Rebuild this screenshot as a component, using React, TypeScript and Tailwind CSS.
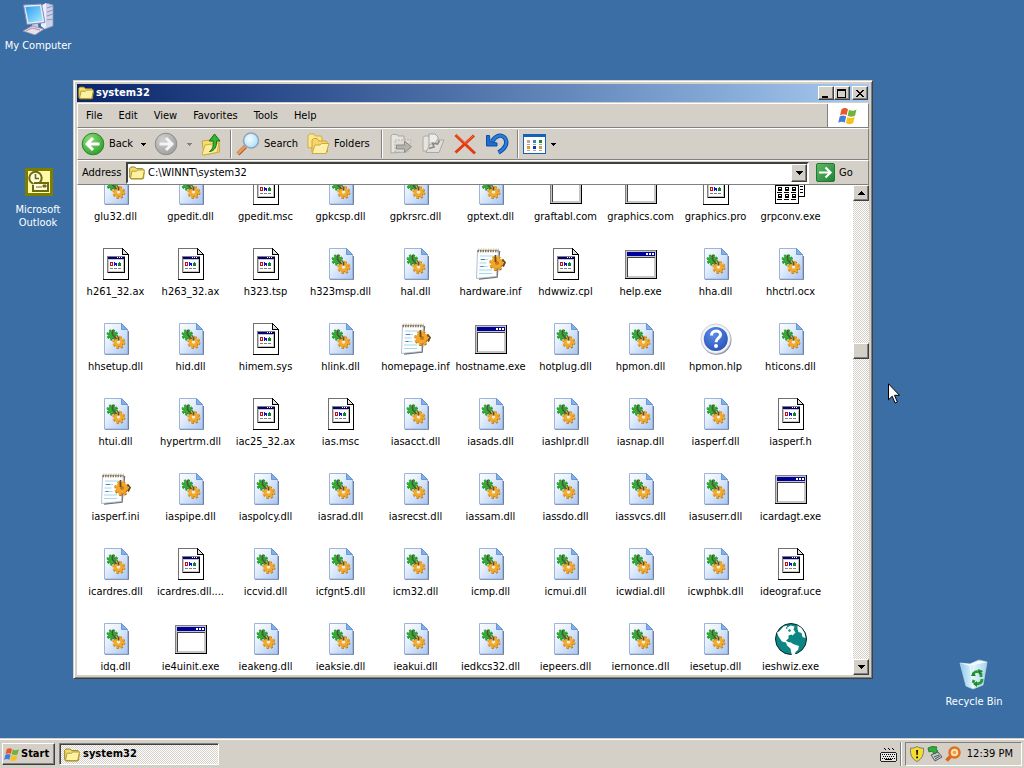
import type { ReactNode } from "react";

type Kind = "dll" | "page" | "inf" | "exe" | "hlp" | "grp" | "globe";

/* One string per row: name or name|kind (dll by default) */
const ROWS = [
  "glu32.dll gpedit.dll gpedit.msc|page gpkcsp.dll gpkrsrc.dll gptext.dll graftabl.com|exe graphics.com|exe graphics.pro|page grpconv.exe|grp",
  "h261_32.ax|page h263_32.ax|page h323.tsp|page h323msp.dll hal.dll hardware.inf|inf hdwwiz.cpl|page help.exe|exe hha.dll hhctrl.ocx",
  "hhsetup.dll hid.dll himem.sys|page hlink.dll homepage.inf|inf hostname.exe|exe hotplug.dll hpmon.dll hpmon.hlp|hlp hticons.dll",
  "htui.dll hypertrm.dll iac25_32.ax|page ias.msc|page iasacct.dll iasads.dll iashlpr.dll iasnap.dll iasperf.dll iasperf.h|page",
  "iasperf.ini|inf iaspipe.dll iaspolcy.dll iasrad.dll iasrecst.dll iassam.dll iassdo.dll iassvcs.dll iasuserr.dll icardagt.exe|exe",
  "icardres.dll icardres.dll....|page iccvid.dll icfgnt5.dll icm32.dll icmp.dll icmui.dll icwdial.dll icwphbk.dll ideograf.uce|page",
  "idq.dll ie4uinit.exe|exe ieakeng.dll ieaksie.dll ieakui.dll iedkcs32.dll iepeers.dll iernonce.dll iesetup.dll ieshwiz.exe|globe",
];

const FILES = ROWS.flatMap((row) => row.split(" ")).map((f) => {
  const [name, kind] = f.split("|");
  return { name, kind: (kind ?? "dll") as Kind };
});

const MENUS = ["File", "Edit", "View", "Favorites", "Tools", "Help"];

const SCROLL_POS = 142 / 442;

const RAISED =
  "border border-white border-r-[#404040] border-b-[#404040] bg-[#d4d0c8] shadow-[inset_-1px_-1px_0_#808080]";

const DITHER =
  "bg-[repeating-conic-gradient(#ffffff_0_25%,#d4d0c8_0_50%)] bg-[length:2px_2px]";

/* ---------- icons ---------- */

function Gear({ x, y, r, fill, edge }: { x: number; y: number; r: number; fill: string; edge: string }) {
  const step = (2 * Math.PI * r) / 16;
  return (
    <g>
      <circle cx={x + 0.5} cy={y + 0.7} r={r} fill="none" stroke={edge} strokeWidth="2" strokeDasharray={`${step} ${step}`} />
      <circle cx={x + 0.5} cy={y + 0.7} r={r - 0.8} fill={edge} />
      <circle cx={x} cy={y} r={r} fill="none" stroke={fill} strokeWidth="1.800" strokeDasharray={`${step} ${step}`} />
      <circle cx={x} cy={y} r={r - 0.8} fill={fill} />
    </g>
  );
}

function DllIcon() {
  return (
    <svg className="size-8" viewBox="0 0 32 32" aria-hidden="true">
      <path d="M5 31.5h23.500V8" fill="none" stroke="#6f7f9f" />
      <path d="M4.500 .500h17l6 6v24.500h-23z" fill="url(#dllPage)" stroke="#9db4dc" />
      <path d="M21.500 .500v6h6z" fill="#7fb0ea" stroke="#5a8ccb" strokeWidth=".8" />
      <Gear x={12} y={11.500} r={4.600} fill="#35ac35" edge="#1b7a22" />
      <Gear x={18.500} y={19} r={5.400} fill="#f2aa2c" edge="#b87414" />
      <circle cx="18.500" cy="19" r="1.800" fill="#f4ead0" />
      <path d="M12.500 7v4.500l4 4.500M18.500 13.500v4" fill="none" stroke="#4f5340" strokeWidth="1.600" />
    </svg>
  );
}

function PageIcon() {
  return (
    <svg className="size-8" viewBox="0 0 32 32" shapeRendering="crispEdges" aria-hidden="true">
      <path d="M3 0h20v1h1v1h1v1h1v1h1v1h1v1h1v26H3z" fill="#000" />
      <path d="M3 0h19v1H4v30H3z" fill="#707070" />
      <path d="M4 1h18v6h6v24H4z" fill="#fff" />
      <path d="M23 2h1v1h1v1h1v1h1v1h-4z" fill="#e0e0e0" />
      <path d="M7 8h18v17H7z" fill="#808080" />
      <path d="M8 9h17v16H8z" fill="#000" />
      <path d="M8 9h16v15H8z" fill="#c8c4bc" />
      <path d="M9 12h14v11H9z" fill="#fff" />
      <path d="M8 9h16v2H8z" fill="#00007f" />
      <path d="M17 9h1v1h-1zM19 9h1v1h-1zM21 9h1v1h-1z" fill="#fff" />
      <path d="M10 14h3v1h-3zM10 15h1v3h-1zM12 15h1v3h-1zM11 17h1v1h-1z" fill="#c01020" />
      <path d="M14 14h1v4h-1zM15 15h2v2h-2zM16 17h1v1h-1z" fill="#1010d0" />
      <path d="M19 14h1v1h-1zM18 15h3v3h-3z" fill="#108030" />
      <path d="M10 20h3v1h-3zM14 20h3v1h-3zM18 20h3v1h-3z" fill="#808080" />
    </svg>
  );
}

function InfIcon() {
  return (
    <svg className="size-8" viewBox="0 0 32 32" aria-hidden="true">
      <path d="M4 31l18-2 2.500-26" fill="none" stroke="#6d6f72" strokeWidth="1.500" />
      <path d="M2.500 2.500h21l-2 26L1.500 30.500z" fill="#fbfdff" stroke="#a4b0c0" strokeWidth=".8" />
      <path d="M2.500 3h21" stroke="#8b7654" strokeWidth="2.500" strokeDasharray="1.500 1" />
      <path d="M3 1.200h21" stroke="#c9bd9f" strokeWidth="1" strokeDasharray="1.500 1" />
      <path d="M5 8h13M5 11.500h8M4.500 15h7M4.500 18.500h8M4 22h13M4 25.500h13" stroke="#a5dbe6" strokeWidth="1.200" />
      <path d="M6 11.500h4M5.500 18.500h3" stroke="#5a7fc0" strokeWidth="1.200" />
      <Gear x={21.500} y={15} r={6.500} fill="#f3a62a" edge="#a9650c" />
      <circle cx="22" cy="15" r="2" fill="#c07c1c" />
      <path d="M20.500 7v7M27.500 11.500l2.500 3-2 4" fill="none" stroke="#6a4a18" strokeWidth="1.800" />
    </svg>
  );
}

function ExeIcon() {
  return (
    <svg className="size-8" viewBox="0 0 32 32" shapeRendering="crispEdges" aria-hidden="true">
      <path d="M0 2h32v29H0z" fill="#000" />
      <path d="M0 2h31v28H0z" fill="#808080" />
      <path d="M1 3h30v27H1z" fill="#c6c6c6" />
      <path d="M3 9h26v19H3z" fill="#fff" />
      <path d="M2 9h1v20H2zM2 9h28v1H2z" fill="#404040" />
      <path d="M2 4h28v4H2z" fill="#00009c" />
      <path d="M21 5h2v2h-2zM24 5h2v2h-2zM27 5h2v2h-2z" fill="#fff" />
    </svg>
  );
}

function HelpIcon() {
  return (
    <svg className="size-8" viewBox="0 0 32 32" aria-hidden="true">
      <circle cx="16.500" cy="16.800" r="15" fill="#8b8f99" />
      <circle cx="15.800" cy="15.800" r="14.800" fill="#f3f4f8" stroke="#c3c7d2" strokeWidth=".8" />
      <circle cx="15.800" cy="16" r="12" fill="url(#helpBlue)" />
      <path d="M11.500 12.500c0-5.800 9-5.800 9-.8 0 3.600-4.500 3.400-4.500 7.500" fill="none" stroke="#fff" strokeWidth="3" />
      <circle cx="16" cy="23" r="2" fill="#fff" />
    </svg>
  );
}

function GroupIcon() {
  const cells = [14, 21];
  return (
    <svg className="size-8" viewBox="0 0 32 32" shapeRendering="crispEdges" aria-hidden="true">
      <path d="M18 6h12v18H18z" fill="#000" />
      <path d="M19 7h10v16H19z" fill="#fff" />
      <path d="M25 10h3v1h-3zM25 13h3v1h-3zM25 16h3v1h-3zM25 19h3v1h-3z" />
      <path d="M0 9h24v22H0z" fill="#000" />
      <path d="M1 10h21v1H1z" fill="#1f9a8c" />
      <path d="M1 13h22v17H1z" fill="#fff" />
      {cells.map((y) =>
        [3, 10, 17].map((x) => (
          <g key={`${x}-${y}`}>
            <rect x={x} y={y} width="4" height="4" fill="#000" />
            <rect x={x + 1} y={y + 1} width="2" height="1" fill="#fff" />
            <rect x={x - 1} y={y + 5} width="5" height="1" fill="#000" />
          </g>
        ))
      )}
    </svg>
  );
}

function GlobeIcon() {
  return (
    <svg className="size-8" viewBox="0 0 32 32" aria-hidden="true">
      <circle cx="16" cy="16" r="15.500" fill="#0b8682" stroke="#0a2a2a" strokeWidth="1" />
      <path
        d="M4.500 8l4-4.500 3-1 1 2 3-2 4 1-1 3 2 3-3 3-1-1-3 1v3l-2.500 2 2 1.500 3 .500 2 1.500 6 2-1 4-2.500 2-.5 3-3 .5-1-4-.5-3-3.500-3-1-3-4-1-3.500-5-1.500-4z"
        fill="#fff"
      />
      <path d="M22.500 2.500l4 2.500 3 5 1 5-3-1-1-4-3-1-1-3z" fill="#fff" />
      <path d="M13 7l2-1 1 2-2 1zM11 4l2 1-2 1z" fill="#0b8682" />
    </svg>
  );
}

const FILE_ICONS: Record<Kind, () => ReactNode> = {
  dll: DllIcon,
  page: PageIcon,
  inf: InfIcon,
  exe: ExeIcon,
  hlp: HelpIcon,
  grp: GroupIcon,
  globe: GlobeIcon,
};

function FolderIcon({ className = "size-4" }: { className?: string }) {
  return (
    <svg className={className} viewBox="0 0 16 16" aria-hidden="true">
      <path d="M.7 12.500V3.200L1.900 2h4l1.400 1.600h6.500l.9 1v8.400l-1 1H2z" fill="#f3dc6c" stroke="#8c7a22" strokeWidth=".9" />
      <path d="M1.500 13.500L3 6.200h4.500L8.800 5h6.500v1.500l-1.500 7z" fill="#fdf2a2" stroke="#a08a28" strokeWidth=".8" />
      <path d="M3 13.500h11l1.300-6.500" fill="none" stroke="#b89a25" strokeWidth="1" />
    </svg>
  );
}

function WindowsFlag({ className }: { className: string }) {
  return (
    <svg className={className} viewBox="0 0 20 18" aria-hidden="true">
      <path d="M3.500 2.200C6 .6 8 .8 10 2.200L8.500 8.300C6.500 7 4.500 7 2 8.400z" fill="#e8562a" />
      <path d="M11 2.700c2.300 1.300 4.500 1.400 7.500-.2L17 8.700c-3 1.500-5 1.300-7.400.1z" fill="#6fb43a" />
      <path d="M1.700 9.500c2.500-1.400 4.500-1.300 6.500 0l-1.500 6.200c-2-1.400-4-1.400-6.500.1z" fill="#3f7fd8" />
      <path d="M9.300 10c2.400 1.300 4.500 1.300 7.400-.1l-1.500 6c-3 1.600-5 1.600-7.400.2z" fill="#f7c11f" />
    </svg>
  );
}

function Caret({ muted = false }: { muted?: boolean }) {
  return (
    <svg className="h-[3px] w-[5px]" viewBox="0 0 5 3" shapeRendering="crispEdges" aria-hidden="true">
      <path d="M0 0h5v1H0zM1 1h3v1H1zM2 2h1v1H2z" fill={muted ? "#808080" : "#000"} />
    </svg>
  );
}

function Arrow({ up = false }: { up?: boolean }) {
  return (
    <svg className="h-1 w-[7px]" viewBox="0 0 7 4" shapeRendering="crispEdges" aria-hidden="true">
      {up ? <path d="M3 0h1v1H3zM2 1h3v1H2zM1 2h5v1H1zM0 3h7v1H0z" /> : <path d="M0 0h7v1H0zM1 1h5v1H1zM2 2h3v1H2zM3 3h1v1H3z" />}
    </svg>
  );
}

function RoundArrow({ back = false }: { back?: boolean }) {
  return (
    <svg className="size-6" viewBox="0 0 24 24" aria-hidden="true">
      <circle cx="12" cy="12" r="10.800" fill={back ? "url(#backGreen)" : "url(#fwdGray)"} stroke={back ? "#258a24" : "#8d8d8d"} />
      {back ? (
        <path d="M18.500 12H7M12 6l-6 6 6 6" fill="none" stroke="#fff" strokeWidth="3" />
      ) : (
        <path d="M5.500 12H17M12 6l6 6-6 6" fill="none" stroke="#f4f4f4" strokeWidth="3" />
      )}
    </svg>
  );
}

function UpIcon() {
  return (
    <svg className="size-6" viewBox="0 0 24 24" aria-hidden="true">
      <path d="M3 9l8-1 1 1 8-1 .500 12L5 23z" fill="#f5dc74" stroke="#c8a63a" />
      <path d="M3 22.500L6 13l14-2-2 9.500L4 23z" fill="#fbeb9a" stroke="#d0ae40" />
      <path d="M10.500 19.500c3-2 4-5 3.700-10.500h-4L15.500 2l5.500 7h-3.500c.3 6-2 10-7 10.500z" fill="#35b335" stroke="#167018" />
    </svg>
  );
}

function SearchIcon() {
  return (
    <svg className="size-6" viewBox="0 0 24 24" aria-hidden="true">
      <path d="M9.500 14.500L2 22" stroke="#a85c34" strokeWidth="4" />
      <path d="M9.500 14L2 21.500" stroke="#ee9a5c" strokeWidth="2.500" />
      <circle cx="15" cy="8.500" r="7.500" fill="url(#lens)" stroke="#8fa5bd" strokeWidth="1.600" />
    </svg>
  );
}

function FoldersIcon() {
  return (
    <svg className="size-6" viewBox="0 0 24 24" aria-hidden="true">
      <path d="M2 16V4l1.500-2H8l1.500 2H15l1 2v9z" fill="#fbe692" stroke="#d1ac3e" />
      <path d="M6 20V8l1.500-1.500H11L13 9h7l1.500 1.500V20z" fill="#f5d66b" stroke="#cda334" />
      <path d="M6 21.500L9 13h5l1.500-1.500H23L20 21.500z" fill="#fdf0a8" stroke="#d0a93c" />
    </svg>
  );
}

function MoveIcon({ copy = false }: { copy?: boolean }) {
  return (
    <svg className="size-6" viewBox="0 0 24 24" aria-hidden="true">
      {copy ? (
        <>
          <path d="M2 19V6l1.500-2H8l1 2h2v13z" fill="#e6e4df" stroke="#aaa8a2" />
          <path d="M8 2h6l3 3v12H8z" fill="#eeece8" stroke="#a5a39d" />
          <path d="M5 20.500L9 12h5l2-4h7l-5 12.500z" fill="#e0deda" stroke="#aaa8a2" />
          <path d="M8 16.500l5-1.500-1.500-4 5 1 2-3.500" fill="none" stroke="#8c8a85" strokeWidth="1.600" />
        </>
      ) : (
        <>
          <path d="M2 21V4l1.500-1.500H8L9 4h6v16z" fill="#e6e4df" stroke="#aaa8a2" />
          <path d="M6 20V8h16l-3 12z" fill="#dedcd7" stroke="#b4b2ac" strokeDasharray="2 1" />
          <path d="M7.500 13h8V9l7 5.800-7 5.700V17h-8z" fill="#b4b2ad" stroke="#8c8a85" />
        </>
      )}
    </svg>
  );
}

function DeleteIcon() {
  return (
    <svg className="size-6" viewBox="0 0 24 24" aria-hidden="true">
      <path d="M2.500 3L22 21.500M21 3.500L2.500 20.500" fill="none" stroke="#e23a13" strokeWidth="3" />
      <path d="M3 2.500L12 11M20 4l-8 7.500" fill="none" stroke="#ff6a3c" strokeWidth="1" />
    </svg>
  );
}

function UndoIcon() {
  return (
    <svg className="size-6" viewBox="0 0 24 24" aria-hidden="true">
      <path d="M7 9.500C11 3.500 16 2 19.500 5.500c4 5 1 11-6 15" fill="none" stroke="#0c4fa8" strokeWidth="4.400" />
      <path d="M7 9.500C11 3.500 16 2 19.500 5.500c4 5 1 11-6 15" fill="none" stroke="#2b7ddb" strokeWidth="2.400" />
      <path d="M1.500 3.500v10.500h10.500v-3L5 9.500l-.5-6z" fill="#1f6dcc" stroke="#0c4fa8" strokeLinejoin="round" />
    </svg>
  );
}

function ViewsIcon() {
  const dots = [
    [5, 9, "#d0a0a0"], [11, 9, "#3a84c8"], [17, 9, "#1b8a2c"],
    [5, 15, "#e09a3c"], [11, 15, "#1038b0"], [17, 15, "#c8a03c"],
  ] as const;
  return (
    <svg className="size-6" viewBox="0 0 24 24" shapeRendering="crispEdges" aria-hidden="true">
      <rect x="0" y="2" width="23" height="20" rx="1" fill="#1560bd" />
      <rect x="1" y="5" width="21" height="16" fill="#fdfdfb" />
      {dots.map(([x, y, fill]) => (
        <g key={`${x}-${y}`}>
          <rect x={x - 1} y={y - 1} width="3" height="3" fill={fill} />
          <rect x={x - 1} y={y + 3} width="3" height="1" fill="#a8a8a8" />
        </g>
      ))}
    </svg>
  );
}

function GoIcon() {
  return (
    <svg className="size-[19px]" viewBox="0 0 19 19" aria-hidden="true">
      <rect x=".5" y=".5" width="18" height="18" rx="1.500" fill="url(#goGreen)" stroke="#1f7a35" />
      <path d="M3 9.500h11M9.500 4.500l5 5-5 5" fill="none" stroke="#fff" strokeWidth="2.200" />
    </svg>
  );
}

function ComputerIcon() {
  return (
    <svg className="size-8" viewBox="0 0 32 32" aria-hidden="true">
      <path d="M19 3l5-3 7 2v21l-8 3-4-3z" fill="#cdd2ea" stroke="#8d96bd" strokeWidth=".8" />
      <path d="M19 3l5-3v24l-1 2-4-3z" fill="#eceffa" />
      <path d="M25 5l6-2M25 9l6-2M25 13l6-2M25 17l6-1" stroke="#8f98bd" strokeWidth="1.200" />
      <path d="M1.500 2l18-1 3.500 18.500L5 21.500z" fill="#e8ebf5" stroke="#7d8db8" />
      <path d="M3.500 4L18 3l2.700 14.800L6.500 19.500z" fill="url(#screen)" />
      <path d="M10 21.500l6-.7.500 4-6 1z" fill="#c6cce2" />
      <path d="M1 28l9-5 12 3-9 6z" fill="#e4e2ec" stroke="#8d90ac" strokeWidth=".8" />
      <path d="M4 28l6-3 8 2" fill="none" stroke="#c06a8a" strokeWidth=".8" />
    </svg>
  );
}

function OutlookIcon() {
  return (
    <svg className="size-8" viewBox="0 0 32 32" aria-hidden="true">
      <path d="M3 1h28v28H3z" fill="#7d7d00" />
      <path d="M6 4h22v22H6z" fill="#fff9a8" />
      <circle cx="13.500" cy="11" r="6.200" fill="#fffde0" stroke="#6d6a10" strokeWidth="2" />
      <path d="M13.500 7v4.500H17" fill="none" stroke="#6d6a10" strokeWidth="1.600" />
      <path d="M12 16h14v8H11v-6" fill="#fffde0" stroke="#6d6a10" strokeWidth="2" />
      <path d="M21 18h3v2h-3zM14 20h6" fill="#6d6a10" stroke="#6d6a10" />
    </svg>
  );
}

function RecycleIcon() {
  return (
    <svg className="size-8" viewBox="0 0 32 32" aria-hidden="true">
      <path d="M2 4l10 1 9-4 8 2-4 23-10 4-7-3z" fill="url(#bin)" stroke="#b7d4e6" strokeWidth=".8" />
      <path d="M2 4l10 3 17-4-9-1-8 3z" fill="#f4fbff" />
      <path d="M12 7l3 22" stroke="#fff" strokeOpacity=".7" />
      <path d="M15 17c0-4 3-5 6-4M23 14v4M24 20c0 4-3 5-6 5M15 24l1-3" fill="none" stroke="#259c35" strokeWidth="2.800" />
      <path d="M20 10l5 2-4 4zM19 22v6l-4-3zM13 17h5l-3-4z" fill="#1b8a2c" />
    </svg>
  );
}

function KeyboardIcon() {
  return (
    <svg className="h-4 w-[17px]" viewBox="0 0 17 16" shapeRendering="crispEdges" aria-hidden="true">
      <path d="M4 2h1v1h1v1H5V3H4zM8 2h1v1h1v1H9V3H8zM12 2h1v1h1v1h-1V3h-1z" />
      <path d="M1 6h15v1h1v8h-1v1H1v-1H0V7h1z" fill="#222" />
      <path d="M1 7h15v8H1z" fill="#e8e6e0" />
      <path d="M2 8.500h13M3 10.500h12M2 12.500h13" stroke="#000" strokeDasharray="1 1" />
      <path d="M5 13h7v1H5z" />
    </svg>
  );
}

/* Gradients shared by the icons above */
function Defs() {
  return (
    <svg className="absolute size-0" aria-hidden="true">
      <defs>
        <linearGradient id="dllPage" x1="0" y1="0" x2="1" y2="1">
          <stop offset="0" stopColor="#fdfeff" />
          <stop offset=".4" stopColor="#e4eefc" />
          <stop offset="1" stopColor="#a9c6f2" />
        </linearGradient>
        <radialGradient id="helpBlue" cx=".4" cy=".3" r=".8">
          <stop offset="0" stopColor="#5f8be8" />
          <stop offset="1" stopColor="#2350b4" />
        </radialGradient>
        <radialGradient id="backGreen" cx=".35" cy=".3" r=".8">
          <stop offset="0" stopColor="#8fdc7c" />
          <stop offset="1" stopColor="#2a9c28" />
        </radialGradient>
        <radialGradient id="fwdGray" cx=".35" cy=".3" r=".8">
          <stop offset="0" stopColor="#d0d0d0" />
          <stop offset="1" stopColor="#9c9c9c" />
        </radialGradient>
        <radialGradient id="lens" cx=".4" cy=".4" r=".7">
          <stop offset="0" stopColor="#f4fdff" />
          <stop offset="1" stopColor="#a6dcf6" />
        </radialGradient>
        <linearGradient id="goGreen" x1="0" y1="0" x2="1" y2="1">
          <stop offset="0" stopColor="#63b868" />
          <stop offset="1" stopColor="#1c8434" />
        </linearGradient>
        <linearGradient id="screen" x1="0" y1="0" x2="1" y2="1">
          <stop offset="0" stopColor="#2e9bf0" />
          <stop offset="1" stopColor="#a8ecff" />
        </linearGradient>
        <linearGradient id="bin" x1="0" y1="0" x2="1" y2="0">
          <stop offset="0" stopColor="#8ccdec" />
          <stop offset=".5" stopColor="#e2f4fc" />
          <stop offset="1" stopColor="#a9d3ea" />
        </linearGradient>
      </defs>
    </svg>
  );
}

/* ---------- pieces ---------- */

function DesktopIcon({ className, icon, children }: { className: string; icon: ReactNode; children: ReactNode }) {
  return (
    <button type="button" className={`absolute flex w-[76px] flex-col items-center gap-1 px-1 text-[11px] leading-[13px] text-white ${className}`}>
      {icon}
      <span>{children}</span>
    </button>
  );
}

function ToolButton({ label, className = "", children }: { label: string; className?: string; children: ReactNode }) {
  return (
    <button type="button" aria-label={label} className={`flex shrink-0 items-center gap-1 ${className}`}>
      {children}
    </button>
  );
}

function Separator() {
  return <div className="h-7 w-[2px] shrink-0 border-l border-[#808080] bg-white" />;
}

function CaptionButton({ label, d, className = "" }: { label: string; d: string; className?: string }) {
  return (
    <button type="button" aria-label={label} className={`flex h-[14px] w-4 items-center justify-center ${RAISED} ${className}`}>
      <svg className="h-[9px] w-[10px]" viewBox="0 0 10 9" shapeRendering="crispEdges" aria-hidden="true">
        <path d={d} />
      </svg>
    </button>
  );
}

function TitleBar() {
  return (
    <header className="flex h-[18px] shrink-0 items-center bg-linear-to-r from-[#0a246a] to-[#a6caf0] px-px">
      <FolderIcon />
      <h1 className="ml-[2px] flex-1 pt-px text-[11px] font-bold text-white">system32</h1>
      <CaptionButton label="Minimize" d="M1 7h6v2H1z" />
      <CaptionButton label="Maximize" d="M0 0h9v9H0zM1 2v6h7V2z" />
      <CaptionButton
        label="Close"
        className="ml-[2px]"
        d="M1 1h2v1h1v1h2V2h1V1h2v1H8v1H7v1H6v1h1v1h1v1h1v1H7V7H6V6H4v1H3v1H1V7h1V6h1V5h1V4H3V3H2V2H1z"
      />
    </header>
  );
}

function MenuBar() {
  return (
    <div className="mt-px flex h-[25px] shrink-0 border border-white border-r-[#808080] border-b-[#808080]">
      <nav className="flex flex-1 items-center pt-[2px]">
        {MENUS.map((m) => (
          <button key={m} type="button" className="px-2 text-[11px]">
            {m}
          </button>
        ))}
      </nav>
      <div className="flex w-[41px] items-center justify-center border-l border-[#808080] bg-white">
        <WindowsFlag className="h-[18px] w-5" />
      </div>
    </div>
  );
}

function Toolbar() {
  return (
    <div className="flex h-8 shrink-0 items-center border border-white border-r-[#808080] border-b-[#808080] pl-[3px] text-[11px]">
      <ToolButton label="Back">
        <RoundArrow back />
        <span className="mr-1 pt-px">Back</span>
        <Caret />
      </ToolButton>
      <ToolButton label="Forward" className="ml-2">
        <RoundArrow />
        <span className="w-px" />
        <Caret muted />
      </ToolButton>
      <ToolButton label="Up" className="mx-[7px]">
        <UpIcon />
      </ToolButton>
      <Separator />
      <ToolButton label="Search" className="ml-1">
        <SearchIcon />
        <span className="pt-px">Search</span>
      </ToolButton>
      <ToolButton label="Folders" className="mr-[11px] ml-2">
        <FoldersIcon />
        <span className="pt-px">Folders</span>
      </ToolButton>
      <Separator />
      <div className="mr-2 ml-[6px] flex gap-2">
        <ToolButton label="Move To"><MoveIcon /></ToolButton>
        <ToolButton label="Copy To"><MoveIcon copy /></ToolButton>
        <ToolButton label="Delete"><DeleteIcon /></ToolButton>
        <ToolButton label="Undo"><UndoIcon /></ToolButton>
      </div>
      <Separator />
      <ToolButton label="Views" className="ml-1">
        <ViewsIcon />
        <Caret />
      </ToolButton>
    </div>
  );
}

function AddressBar() {
  return (
    <form className="flex h-[25px] shrink-0 items-center border border-white border-r-[#808080] border-b-[#808080] pl-1 text-[11px]">
      <label htmlFor="address" className="w-11 pt-px">
        Address
      </label>
      <div className="flex h-[22px] flex-1 items-center border-2 border-[#808080] border-t-[#404040] border-l-[#404040] border-r-white border-b-white bg-white pl-px">
        <FolderIcon />
        <input id="address" defaultValue="C:\WINNT\system32" className="ml-[3px] min-w-0 flex-1 pt-[2px] outline-none" />
        <button type="button" aria-label="Show addresses" className={`flex h-[18px] w-4 items-center justify-center ${RAISED}`}>
          <Arrow />
        </button>
      </div>
      <button type="button" className="ml-[7px] flex w-[52px] items-center gap-1">
        <GoIcon />
        <span className="pt-px">Go</span>
      </button>
    </form>
  );
}

function ScrollBar() {
  return (
    <div className={`flex w-4 shrink-0 flex-col ${DITHER}`}>
      <button type="button" aria-label="Scroll up" className={`flex size-4 items-center justify-center ${RAISED}`}>
        <Arrow up />
      </button>
      <div style={{ flexGrow: SCROLL_POS }} />
      <div className={`size-4 ${RAISED}`} />
      <div style={{ flexGrow: 1 - SCROLL_POS }} />
      <button type="button" aria-label="Scroll down" className={`flex size-4 items-center justify-center ${RAISED}`}>
        <Arrow />
      </button>
    </div>
  );
}

function FileList() {
  return (
    <div className="flex min-h-0 flex-1 bg-white">
      <div className="flex-1 overflow-hidden">
        {/* the list is scrolled, so the first row sits partly above the edge */}
        <ul className="-mt-3 grid grid-cols-[repeat(auto-fill,75px)] auto-rows-[75px] pl-px">
          {FILES.map(({ name, kind }) => {
            const Icon = FILE_ICONS[kind];
            return (
              <li key={name} className="flex flex-col items-center gap-[5px] text-[11px] leading-[13px] whitespace-nowrap">
                <span className="pl-px">
                  <Icon />
                </span>
                <span>{name}</span>
              </li>
            );
          })}
        </ul>
      </div>
      <ScrollBar />
    </div>
  );
}

function Taskbar() {
  return (
    <footer className="flex h-[30px] shrink-0 items-center border-t border-[#d4d0c8] bg-[#d4d0c8] px-[2px] text-[11px] shadow-[inset_0_1px_0_#ffffff]">
      <button type="button" className={`flex h-[22px] w-[53px] items-center gap-px pt-px pl-px font-bold ${RAISED}`}>
        <WindowsFlag className="h-[15px] w-4" />
        Start
      </button>
      <button
        type="button"
        className={`ml-1 flex h-[22px] w-40 items-center gap-[3px] border border-[#808080] border-r-white border-b-white pt-[2px] pl-1 font-bold shadow-[inset_1px_1px_0_#404040] ${DITHER}`}
      >
        <FolderIcon />
        system32
      </button>
      <div className="ml-auto flex items-center gap-[3px]">
        <KeyboardIcon />
        <div className="h-6 w-[2px] border-l border-[#808080] bg-white" />
        <div className="flex h-6 items-center gap-[2px] border border-[#808080] border-r-white border-b-white pr-2 pl-[3px]">
          <svg className="size-4" viewBox="0 0 16 16" aria-hidden="true">
            <path d="M8 .6c2 1.200 4 1.600 6.500 1.600C15 8.500 13 13 8 15.500 3 13 1 8.500 1.500 2.200 4 2.200 6 1.800 8 .6z" fill="#f9dd2c" stroke="#777a70" />
            <path d="M7.200 4h1.800l-.3 5H7.500zM7.200 10.500H9v1.800H7.200z" />
          </svg>
          <svg className="size-4" viewBox="0 0 16 16" aria-hidden="true">
            <path d="M4 9l7-3 4 5-7 4z" fill="#c4c6c8" stroke="#55595c" />
            <path d="M7 11l5-2M8 13l5-3" stroke="#55595c" />
            <path d="M1 2l4-1.500 5 .5-1 2 2 2-4 3-2-3-3 1z" fill="#2fae3a" stroke="#14701f" strokeWidth=".8" />
          </svg>
          <svg className="size-4" viewBox="0 0 16 16" aria-hidden="true">
            <path d="M6.500 9.500L1.500 14.500" stroke="#d9641a" strokeWidth="3.500" />
            <circle cx="9.500" cy="6.500" r="5" fill="#fbe3b8" stroke="#e2701c" strokeWidth="2.500" />
            <circle cx="9.500" cy="6.500" r="1.800" fill="#f0a040" />
          </svg>
          <time className="ml-1 pt-px">12:39 PM</time>
        </div>
      </div>
    </footer>
  );
}

export default function App() {
  return (
    <div className="flex h-screen flex-col overflow-hidden bg-[#3a6ea5] font-['DejaVu_Sans_Condensed','DejaVu_Sans',sans-serif] text-black">
      <Defs />
      <main className="relative flex-1">
        <DesktopIcon className="top-[3px] left-0" icon={<ComputerIcon />}>
          <span className="whitespace-nowrap">My Computer</span>
        </DesktopIcon>
        <DesktopIcon className="top-[167px] left-0" icon={<OutlookIcon />}>
          Microsoft Outlook
        </DesktopIcon>
        <DesktopIcon className="right-3 bottom-[30px]" icon={<RecycleIcon />}>
          Recycle Bin
        </DesktopIcon>

        <section className="absolute top-20 right-[151px] bottom-[59px] left-[73px] flex flex-col border border-[#d4d0c8] border-r-[#404040] border-b-[#404040] bg-[#d4d0c8] p-[3px] shadow-[inset_1px_1px_0_#ffffff,inset_-1px_-1px_0_#808080]">
          <TitleBar />
          <MenuBar />
          <Toolbar />
          <AddressBar />
          <FileList />
        </section>

        <svg className="absolute top-[383px] left-[888px] h-[21px] w-3" viewBox="0 0 12 21" aria-hidden="true">
          <path d="M.5.800v16l3.700-3.600 2.900 6.800 2.300-1-2.900-6.700h5z" fill="#fff" stroke="#000" />
        </svg>
      </main>
      <Taskbar />
    </div>
  );
}
